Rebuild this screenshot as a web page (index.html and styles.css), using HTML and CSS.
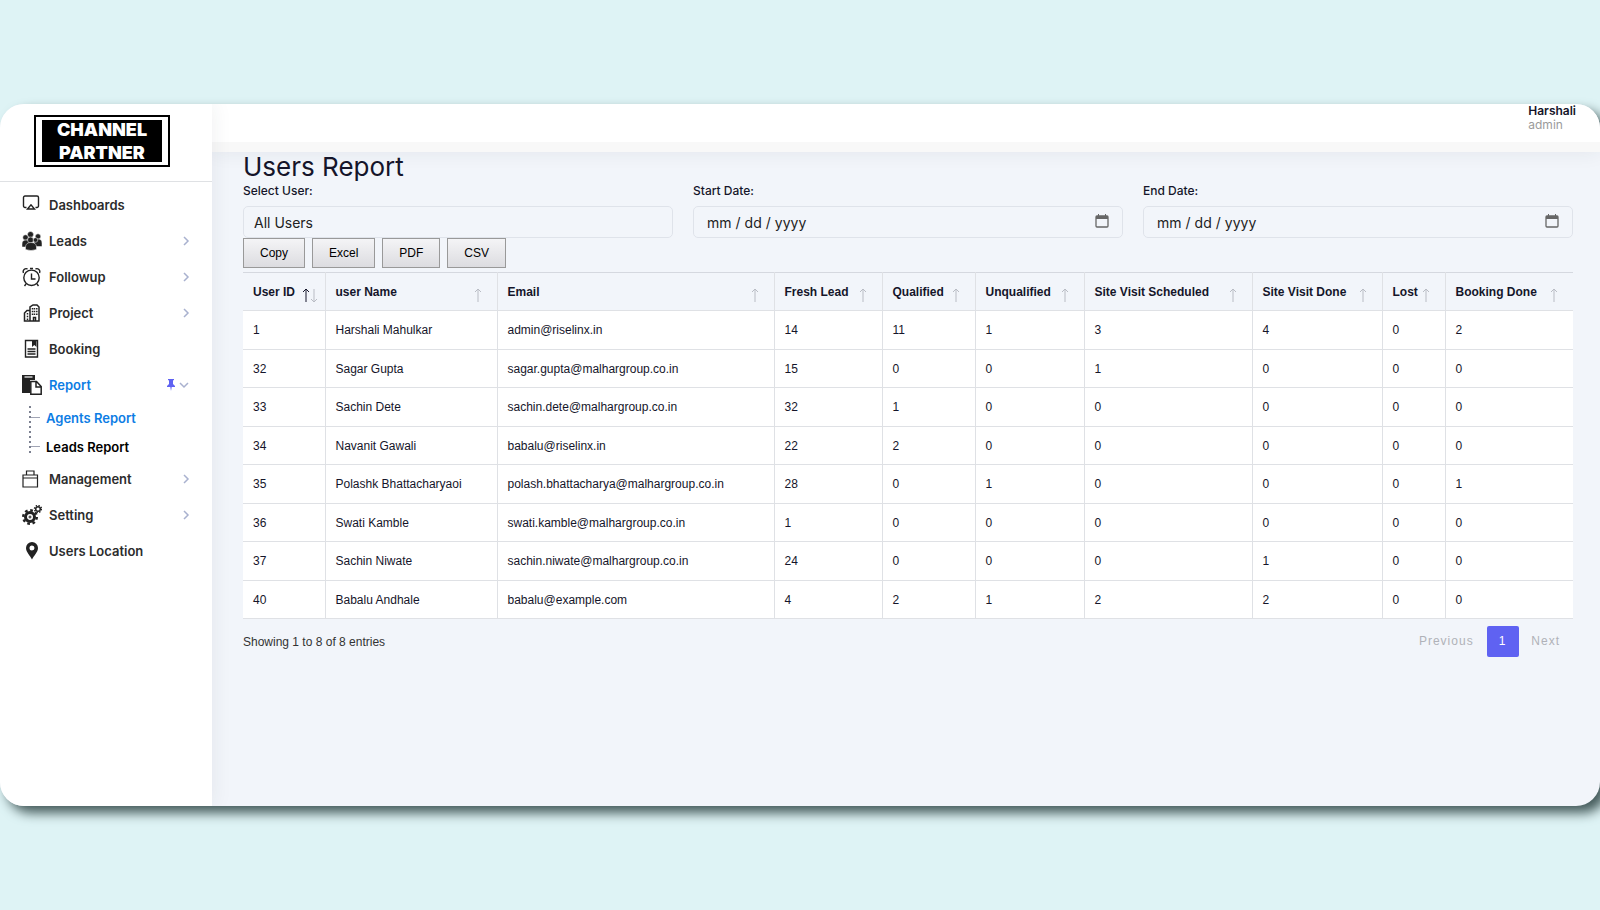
FILE: index.html
```html
<!DOCTYPE html>
<html lang="en">
	<head>
		<meta charset="UTF-8" />
		<meta name="viewport" content="width=device-width, initial-scale=1.0" />
		<title>Users Report</title>
		<link rel="stylesheet" href="styles.css">
	</head>

	<body>
		<div class="app">
			<aside class="sidebar">
				<div class="brand">
					<a class="logo" href="#"><span class="logo-text">CHANNEL<br />PARTNER</span></a>
				</div>
				<nav class="menu">
					<a class="menu-item" href="#">
						<svg class="icon" viewBox="0 0 20 20"><path d="M4.500 12.500H3A1.500 1.500 0 0 1 1.500 11V2.500A1.500 1.500 0 0 1 3 1h12a1.500 1.500 0 0 1 1.500 1.500V11a1.500 1.500 0 0 1-1.500 1.500h-1.500M5.500 14L9 9.800l3.500 4.200z" fill="none" stroke="#222" stroke-width="1.4" /></svg>
						<span>Dashboards</span>
					</a>
					<a class="menu-item" href="#">
						<svg class="icon" viewBox="0 0 20 20"><g fill="#222" stroke="#fff" stroke-width=".5"><circle cx="8.500" cy="3.500" r="3" /><circle cx="3.500" cy="6.500" r="2.700" /><circle cx="16" cy="5.500" r="2.700" /><path d="M0 16v-3c0-3 1.500-4 4-4s4 1 4 4v3zM12 15.500V12c0-3 1.500-4 4-4s4 1 4 4v3.500z" /><circle cx="8.500" cy="9" r="3" /><circle cx="13.500" cy="9" r="2.300" /><path d="M3.500 18.500V16c0-3 2-4.500 5.500-4.500s5.500 1.500 5.500 4.500v2.500q-5.500 2-11 0z" /></g></svg>
						<span>Leads</span>
						<svg class="arrow" viewBox="0 0 8 12"><path d="M2 2l4 4-4 4" /></svg>
					</a>
					<a class="menu-item" href="#">
						<svg class="icon" viewBox="0 0 20 20"><g fill="none" stroke="#222" stroke-width="1.4"><circle cx="9.500" cy="10.800" r="7.700" /><path d="M9.500 6.500V12h4M1.500 6a3 3 0 0 1 4-4M13.500 2a3 3 0 0 1 4 4M4 17l-1.500 2M15 17l1.500 2M8 1.500h3" /></g></svg>
						<span>Followup</span>
						<svg class="arrow" viewBox="0 0 8 12"><path d="M2 2l4 4-4 4" /></svg>
					</a>
					<a class="menu-item" href="#">
						<svg class="icon" viewBox="0 0 20 20"><g fill="none" stroke="#222" stroke-width="1.5"><path d="M8 18V4l3-2h4l2 2v14zM8 7.500H5L2.500 10v8h15M11.500 18v-3.500h2V18" /><path d="M10.500 5v7M12.500 5v7M14.800 5v7M5.500 10v7" stroke-dasharray="1.5 1.2" /></g></svg>
						<span>Project</span>
						<svg class="arrow" viewBox="0 0 8 12"><path d="M2 2l4 4-4 4" /></svg>
					</a>
					<a class="menu-item" href="#">
						<svg class="icon" viewBox="0 0 20 20"><path d="M3.500 1.500h12v16.500h-12zM5.500 10h8M5.500 12.500h8M5.500 15h8" fill="none" stroke="#222" stroke-width="1.4" /><path d="M10 2h4.500v6l-2.200-2L10 8z" fill="#222" /></svg>
						<span>Booking</span>
					</a>
					<a class="menu-item active" href="#">
						<svg class="icon" viewBox="0 0 20 20"><path d="M0 0h13v5H8v13H0z" fill="#222" /><path d="M2.500 2h8" stroke="#fff" stroke-width="1.2" /><path d="M8.800 6.500h5.700l4.700 5v7.700H8.800zM14 6.500V12h5" fill="#fff" stroke="#222" stroke-width="1.5" /></svg>
						<span>Report</span>
						<svg class="pin" viewBox="0 0 8 12"><path d="M1 0h6v1L6 1.500V5l2 2v1H4.700L4 12l-.7-4H0V7l2-2V1.500L1 1z" /></svg>
						<svg class="arrow down" viewBox="0 0 12 12"><path d="M2 4l4 4 4-4" /></svg>
					</a>
					<div class="submenu">
						<a class="submenu-item active" href="#">Agents Report</a>
						<a class="submenu-item" href="#">Leads Report</a>
					</div>
					<a class="menu-item" href="#">
						<svg class="icon" viewBox="0 0 20 20"><path d="M1 6h14.500v12H1zM1 9h14.500M4.500 6V2h7.500v4" fill="none" stroke="#222" stroke-width="1.2" /></svg>
						<span>Management</span>
						<svg class="arrow" viewBox="0 0 8 12"><path d="M2 2l4 4-4 4" /></svg>
					</a>
					<a class="menu-item" href="#">
						<svg class="icon" viewBox="0 0 20 20"><g fill="none" stroke="#222"><circle cx="8" cy="12" r="4.500" stroke-width="3" /><circle cx="8" cy="12" r="6.800" stroke-width="2.4" stroke-dasharray="2.7 2.64" /><circle cx="8" cy="12" r="1" stroke-width="1" /><circle cx="16" cy="4" r="2.300" stroke-width="1.5" /><circle cx="16" cy="4" r="3.500" stroke-width="1.4" stroke-dasharray="1.4 1.35" /></g></svg>
						<span>Setting</span>
						<svg class="arrow" viewBox="0 0 8 12"><path d="M2 2l4 4-4 4" /></svg>
					</a>
					<a class="menu-item" href="#">
						<svg class="icon" viewBox="0 0 20 20"><path d="M10 1a6 6 0 0 1 6 6c0 4-4 7.500-6 11.500C8 14.500 4 11 4 7a6 6 0 0 1 6-6zm0 3.500a2.500 2.500 0 1 0 0 5 2.500 2.500 0 0 0 0-5z" fill="#222" /></svg>
						<span>Users Location</span>
					</a>
				</nav>
			</aside>

			<div class="page">
				<header class="topbar">
					<div class="user">
						<div class="user-name">Harshali</div>
						<div class="user-role">admin</div>
					</div>
				</header>
				<main class="content">
					<h1>Users Report</h1>
					<form class="filters">
						<div class="field">
							<label for="user">Select User:</label>
							<select id="user">
								<option>All Users</option>
							</select>
						</div>
						<div class="field">
							<label for="start">Start Date:</label>
							<input type="date" id="start" />
						</div>
						<div class="field">
							<label for="end">End Date:</label>
							<input type="date" id="end" />
						</div>
					</form>
					<div class="buttons">
						<button type="button">Copy</button>
						<button type="button">Excel</button>
						<button type="button">PDF</button>
						<button type="button">CSV</button>
					</div>
					<table class="report">
						<colgroup>
							<col class="col-id" />
							<col class="col-name" />
							<col class="col-email" />
							<col class="col-fresh" />
							<col class="col-qualified" />
							<col class="col-unqualified" />
							<col class="col-scheduled" />
							<col class="col-visited" />
							<col class="col-lost" />
							<col class="col-booking" />
						</colgroup>
						<thead>
							<tr>
								<th><div class="th">User ID<svg class="sort" viewBox="0 0 16 14"><path class="up" d="M4 14V1M1 4l3-3 3 3" /><path d="M12 1v13M9 11l3 3 3-3" /></svg></div></th>
								<th><div class="th">user Name<svg class="sort" viewBox="0 0 16 14"><path d="M4 14V1M1 4l3-3 3 3" /></svg></div></th>
								<th><div class="th">Email<svg class="sort" viewBox="0 0 16 14"><path d="M4 14V1M1 4l3-3 3 3" /></svg></div></th>
								<th><div class="th">Fresh Lead<svg class="sort" viewBox="0 0 16 14"><path d="M4 14V1M1 4l3-3 3 3" /></svg></div></th>
								<th><div class="th">Qualified<svg class="sort" viewBox="0 0 16 14"><path d="M4 14V1M1 4l3-3 3 3" /></svg></div></th>
								<th><div class="th">Unqualified<svg class="sort" viewBox="0 0 16 14"><path d="M4 14V1M1 4l3-3 3 3" /></svg></div></th>
								<th><div class="th">Site Visit Scheduled<svg class="sort" viewBox="0 0 16 14"><path d="M4 14V1M1 4l3-3 3 3" /></svg></div></th>
								<th><div class="th">Site Visit Done<svg class="sort" viewBox="0 0 16 14"><path d="M4 14V1M1 4l3-3 3 3" /></svg></div></th>
								<th><div class="th">Lost<svg class="sort" viewBox="0 0 16 14"><path d="M4 14V1M1 4l3-3 3 3" /></svg></div></th>
								<th><div class="th">Booking Done<svg class="sort" viewBox="0 0 16 14"><path d="M4 14V1M1 4l3-3 3 3" /></svg></div></th>
							</tr>
						</thead>
						<tbody>
							<tr><td>1</td><td>Harshali Mahulkar</td><td>admin@riselinx.in</td><td>14</td><td>11</td><td>1</td><td>3</td><td>4</td><td>0</td><td>2</td></tr>
							<tr><td>32</td><td>Sagar Gupta</td><td>sagar.gupta@malhargroup.co.in</td><td>15</td><td>0</td><td>0</td><td>1</td><td>0</td><td>0</td><td>0</td></tr>
							<tr><td>33</td><td>Sachin Dete</td><td>sachin.dete@malhargroup.co.in</td><td>32</td><td>1</td><td>0</td><td>0</td><td>0</td><td>0</td><td>0</td></tr>
							<tr><td>34</td><td>Navanit Gawali</td><td>babalu@riselinx.in</td><td>22</td><td>2</td><td>0</td><td>0</td><td>0</td><td>0</td><td>0</td></tr>
							<tr><td>35</td><td>Polashk Bhattacharyaoi</td><td>polash.bhattacharya@malhargroup.co.in</td><td>28</td><td>0</td><td>1</td><td>0</td><td>0</td><td>0</td><td>1</td></tr>
							<tr><td>36</td><td>Swati Kamble</td><td>swati.kamble@malhargroup.co.in</td><td>1</td><td>0</td><td>0</td><td>0</td><td>0</td><td>0</td><td>0</td></tr>
							<tr><td>37</td><td>Sachin Niwate</td><td>sachin.niwate@malhargroup.co.in</td><td>24</td><td>0</td><td>0</td><td>0</td><td>1</td><td>0</td><td>0</td></tr>
							<tr><td>40</td><td>Babalu Andhale</td><td>babalu@example.com</td><td>4</td><td>2</td><td>1</td><td>2</td><td>2</td><td>0</td><td>0</td></tr>
						</tbody>
					</table>
					<div class="table-footer">
						<div class="info">Showing 1 to 8 of 8 entries</div>
						<div class="pagination">
							<a class="page-link" href="#">Previous</a>
							<a class="page-link current" href="#">1</a>
							<a class="page-link" href="#">Next</a>
						</div>
					</div>
				</main>
			</div>
		</div>
	</body>
</html>
```
FILE: styles.css
```css
* {
	box-sizing: border-box;
}

body {
	margin: 0;
	min-height: 100vh;
	padding: 104px 0;
	display: flex;
	background: #def3f5;
	color: #15152a;
	font-family: Inter, "Open Sans", sans-serif;
	font-size: 12px;
}

a {
	color: inherit;
	text-decoration: none;
}

.app {
	flex: 1;
	display: flex;
	overflow: hidden;
	border-radius: 24px;
	background: #f2f5fa;
	box-shadow: 7px 7px 12px #455b5b;
}

/* sidebar */
.sidebar {
	position: relative;
	z-index: 2;
	flex: 0 0 212px;
	background: #fff;
	box-shadow: 0 0 20px rgba(40, 50, 60, 0.08);
}

.brand {
	padding: 11px 34px 14px;
	border-bottom: 1px solid #dfe1e4;
}

.logo {
	display: block;
	width: 136px;
	padding: 3px 6px;
	border: 2px solid #000;
}

.logo-text {
	display: flex;
	align-items: center;
	justify-content: center;
	height: 42px;
	background: #000;
	color: #fff;
	font-size: 18px;
	font-weight: 900;
	line-height: 23px;
	text-align: center;
}

.menu {
	padding-top: 5px;
	font-size: 13px;
	font-weight: 600;
	color: #2c2c2c;
}

.menu-item {
	display: flex;
	align-items: center;
	height: 36px;
	padding: 0 22px;
}

.menu-item span {
	flex: 1;
}

.menu .active {
	color: #0d7de4;
}

.icon {
	width: 20px;
	height: 20px;
	margin-right: 7px;
}

.arrow {
	width: 8px;
	height: 12px;
	fill: none;
	stroke: #a9b1cf;
	stroke-width: 1.5;
}

.arrow.down {
	width: 12px;
}

.pin {
	width: 8px;
	height: 12px;
	margin-right: 3px;
	fill: #5f62f2;
}

.submenu {
	margin-left: 29px;
	/* dotted tree line */
	background: repeating-linear-gradient(transparent 0 3px, #7b8090 3px 5px) left top / 2px 52px no-repeat;
}

.submenu-item {
	display: flex;
	align-items: center;
	height: 29px;
	color: #000;
}

.submenu-item::before {
	content: "";
	width: 9px;
	height: 1px;
	margin: 0 6px 0 2px;
	background: #a0a4b4;
}

/* page */
.page {
	flex: 1;
	min-width: 0;
}

.topbar {
	display: flex;
	justify-content: flex-end;
	height: 48px;
	padding-right: 24px;
	background: #fff;
	border-bottom: 10px solid #f8f8f8;
	box-shadow: 0 0 20px rgba(40, 50, 60, 0.08);
}

.user {
	font-size: 12px;
	line-height: 14px;
}

.user-name {
	font-weight: 600;
}

.user-role {
	color: #9b9b9b;
}

.content {
	padding: 0 27px 40px 31px;
}

h1 {
	margin: 0;
	font-size: 26px;
	font-weight: 400;
	line-height: 30px;
}

.filters {
	display: grid;
	grid-template-columns: repeat(3, 1fr);
	gap: 20px;
}

.field label {
	display: block;
	line-height: 18px;
	margin-bottom: 6px;
	font-weight: 500;
}

.field select,
.field input {
	display: block;
	width: 100%;
	height: 32px;
	padding: 0 10px;
	appearance: none;
	border: 1px solid #dfe3ea;
	border-radius: 5px;
	background: #f2f5fa;
	color: #222;
	font-family: inherit;
	font-size: 14px;
}

.field input {
	padding: 0 12px;
}

.field input::-webkit-datetime-edit-text {
	padding: 0 3px;
}

.field input::-webkit-calendar-picker-indicator {
	width: 16px;
	height: 16px;
	padding: 0;
	background: url("data:image/svg+xml,%3Csvg xmlns='http://www.w3.org/2000/svg' viewBox='0 0 16 16'%3E%3Crect x='2' y='2' width='12' height='11' rx='1' fill='none' stroke='%23666' stroke-width='1.3'/%3E%3Cpath d='M2 2h12v3H2zM4 0h1v2H4zM11 0h1v2h-1z' fill='%23666'/%3E%3C/svg%3E") no-repeat center;
}

.buttons {
	display: flex;
	gap: 7px;
	margin-bottom: 4px;
}

.buttons button {
	height: 30px;
	padding: 0 16px;
	border: 1px solid #999;
	background: linear-gradient(#f4f4f6, #dcdce0);
	color: #000;
	font-family: "Liberation Sans", Arial, sans-serif;
	font-size: 12px;
}

.report,
.table-footer {
	font-family: "Liberation Sans", Arial, sans-serif;
}

.report {
	width: 100%;
	table-layout: fixed;
	border-collapse: collapse;
	border-top: 1px solid #d5d8df;
}

.col-id { width: 82px; }
.col-name { width: 172px; }
.col-email { width: 277px; }
.col-fresh { width: 108px; }
.col-qualified { width: 93px; }
.col-unqualified { width: 109px; }
.col-scheduled { width: 168px; }
.col-visited { width: 130px; }
.col-lost { width: 63px; }
.col-booking { width: 128px; }

.report th,
.report td {
	padding: 12px 10px;
	border-bottom: 1px solid #dfe1e5;
	border-right: 1px solid #dfe1e5;
	line-height: 14px;
	text-align: left;
	white-space: nowrap;
}

.report th:last-child,
.report td:last-child {
	border-right: 0;
}

.report th {
	padding-right: 7px;
	padding-bottom: 11px;
}

.report td {
	background: #fff;
}

.report tbody tr:nth-child(even) td {
	padding-bottom: 11px;
}

.th {
	display: flex;
	justify-content: space-between;
	height: 14px;
}

.sort {
	flex: none;
	width: 16px;
	height: 14px;
	margin-top: 3px;
	overflow: visible;
	fill: none;
	stroke: #b9bcc4;
}

.sort .up {
	stroke: #15152a;
}

.table-footer {
	display: flex;
	align-items: center;
	justify-content: space-between;
	padding-top: 7px;
	color: #333;
}

.pagination {
	display: flex;
}

.page-link {
	padding: 0 13px 0 12px;
	color: #b0b2b8;
	letter-spacing: 1px;
	line-height: 31px;
}

.page-link.current {
	border-radius: 2px;
	background: #5f62f2;
	color: #fff;
}
```
